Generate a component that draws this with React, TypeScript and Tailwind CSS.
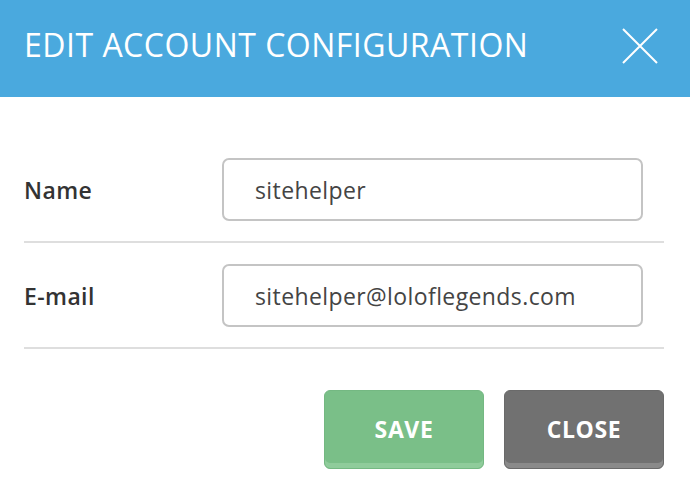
export default function App() {
  return (
    <div className="w-[690px] h-[488px] bg-white overflow-hidden" style={{ fontFamily: '"Open Sans", sans-serif' }}>
      <div className="h-[97px] bg-[#4aa9de] flex items-center justify-between pl-[24px] pr-[32px] pb-[8px]">
        <h1 className="text-[32px] text-white font-normal leading-none tracking-[0.5px]">EDIT ACCOUNT CONFIGURATION</h1>
        <svg width="36" height="36" viewBox="0 0 36 36" className="mt-[3px]">
          <path d="M1 1 L35 35 M35 1 L1 35" stroke="white" strokeWidth="2" fill="none" />
        </svg>
      </div>
      <div className="pt-[40px] pl-[24px] pr-[26px]">
        <FormRow label="Name" value="sitehelper" />
        <FormRow label="E-mail" value="sitehelper@loloflegends.com" />
        <div className="flex justify-end gap-[20px] pt-[41px]">
          <button className="w-[160px] h-[79px] rounded-[6px] bg-[#7abf88] text-white font-bold text-[23px] tracking-[0.6px] shadow-[inset_0_-5px_0_#8fcc9b] border border-[#74b882]">
            SAVE
          </button>
          <button className="w-[160px] h-[79px] rounded-[6px] bg-[#717171] text-white font-bold text-[23px] tracking-[0.6px] shadow-[inset_0_-5px_0_#8a8a8a] border border-[#6a6a6a]">
            CLOSE
          </button>
        </div>
      </div>
    </div>
  );
}

function FormRow({ label, value }: { label: string; value: string }) {
  return (
    <div className="flex items-center pt-[21px] pb-[20px] border-b-2 border-[#dedede]">
      <label className="w-[198px] text-[23px] font-semibold text-[#333333] tracking-[0.4px] pt-[2px]">{label}</label>
      <div className="w-[421px] h-[63px] border-2 border-[#c4c4c4] rounded-[7px] flex items-center pl-[31px] pt-[2px] text-[23px] text-[#444444] tracking-[0.4px]">
        {value}
      </div>
    </div>
  );
}
